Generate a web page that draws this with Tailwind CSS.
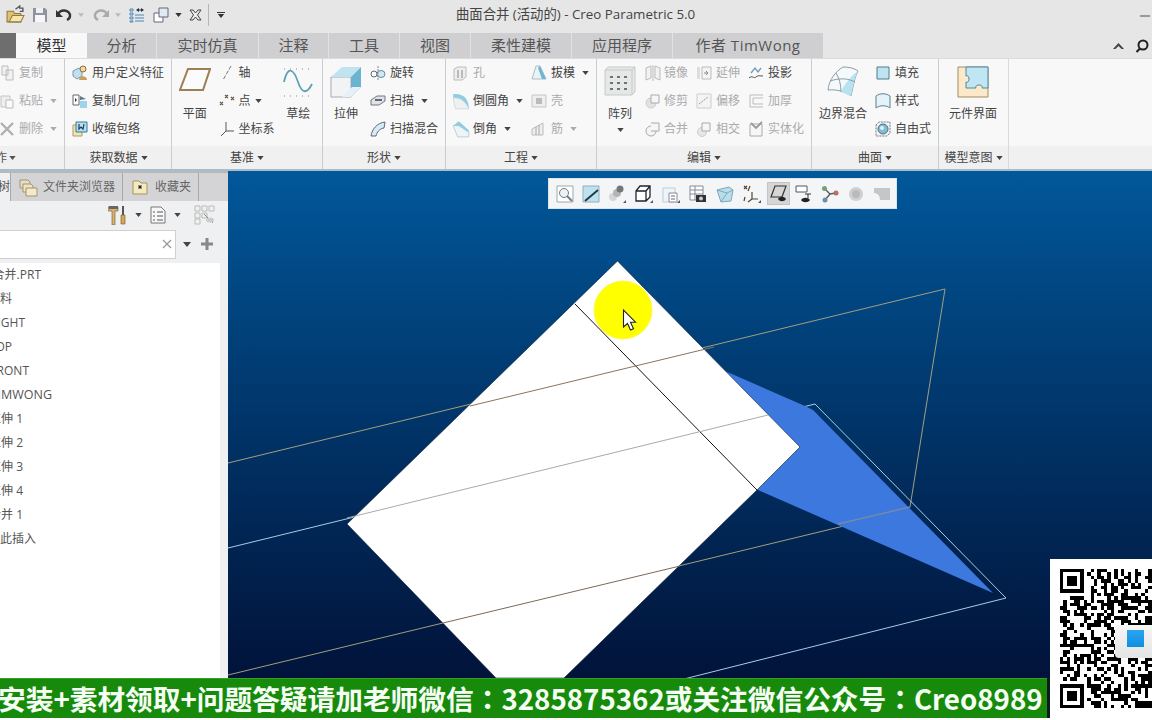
<!DOCTYPE html>
<html lang="zh-CN">
<head>
<meta charset="UTF-8" />
<title>曲面合并 - Creo Parametric 5.0</title>
<script src="https://cdn.jsdelivr.net/npm/@tailwindcss/browser@4"></script>
</head>
<body class="w-[1152px] h-[720px] overflow-hidden bg-white text-[#444] text-[12px] leading-4 font-['Open_Sans','Noto_Sans_CJK_SC',sans-serif]">

<svg class="hidden"><symbol id="caret" viewBox="0 0 8 5"><path d="M0 0H8L4 5Z"/></symbol></svg>

<!-- title bar -->
<div class="relative flex items-center h-[33px] bg-[#e6e6e6]">
  <div class="flex items-center pl-[6px] h-full pb-[4px]">
    <svg class="w-[19px] h-[19px]" viewBox="0 0 18 18"><path d="M1 6h6l1 2h6v8H1z" fill="#e3c06e" stroke="#8d7a4a"/><path d="M3 16l3-6h11l-3 6z" fill="#f8e6a8" stroke="#8d7a4a"/><path d="M9 4l4-3v2h3v3h-3" fill="none" stroke="#555" stroke-width="1.300"/></svg>
    <svg class="w-[16px] h-[16px] ml-[7px]" viewBox="0 0 16 16"><path d="M1 1h12l2 2v12H1z" fill="#8f959e"/><path d="M4 1h7v5H4z" fill="#f0f0f0"/><path d="M3 8h10v7H3z" fill="#f7f7f7"/></svg>
    <svg class="w-[16px] h-[16px] ml-[8px]" viewBox="0 0 16 16"><path d="M2 8a6 5 0 0 1 12 1c0 2-1 3-3 4" fill="none" stroke="#333" stroke-width="2.400"/><path d="M0 3v7h7z" fill="#333"/></svg>
    <svg class="w-[6px] h-[4px] ml-[6px] text-[#bbb] fill-current"><use href="#caret"/></svg>
    <svg class="w-[16px] h-[16px] ml-[9px]" viewBox="0 0 16 16"><path d="M14 8a6 5 0 0 0-12 1c0 2 1 3 3 4" fill="none" stroke="#aaa" stroke-width="2.400"/><path d="M16 3v7H9z" fill="#aaa"/></svg>
    <svg class="w-[6px] h-[4px] ml-[6px] text-[#bbb] fill-current"><use href="#caret"/></svg>
    <svg class="w-[16px] h-[16px] ml-[8px]" viewBox="0 0 16 16"><path d="M1 2h3v2H1zM1 6h3v2H1zM1 10h3v2H1zM1 14h3v1H1zM6 8h9M6 11h9M6 14h9" fill="none" stroke="#4a88b8"/><path d="M7 3l3-2v1.500h2V1l3 2-3 2V3.500h-2V5z" fill="#234"/></svg>
    <svg class="w-[16px] h-[16px] ml-[8px]" viewBox="0 0 16 16"><path d="M1 6h9v9H1z" fill="#fff" stroke="#667"/><path d="M6 1h9v9H6z" fill="#dfeaf2" stroke="#667"/></svg>
    <svg class="w-[7px] h-[4px] ml-[6px] text-[#333] fill-current"><use href="#caret"/></svg>
    <svg class="w-[13px] h-[12px] ml-[7px]" viewBox="0 0 13 12"><path d="M1 1h3l2.500 3L9 1h3L8.500 6 12 11H9L6.500 8 4 11H1l3.500-5z" fill="#eee" stroke="#444"/></svg>
    <div class="w-px h-[22px] bg-[#b5b5b5] ml-[6px]"></div>
    <div class="flex flex-col items-center gap-[1px] ml-[8px]"><div class="w-[8px] h-px bg-[#333]"></div><svg class="w-[8px] h-[4px] text-[#333] fill-current"><use href="#caret"/></svg></div>
  </div>
  <div class="absolute left-[456px] top-[6px] text-[13.350px] text-[#444] whitespace-nowrap">曲面合并 (活动的) - Creo Parametric 5.0</div>
  <div class="absolute right-[2px] top-[15px] w-[10px] h-[2px] bg-[#999]"></div>
</div>

<!-- tabs -->
<div class="flex items-stretch h-[25px] bg-[#e6e6e6] text-[15px] text-[#555]">
  <div class="w-[16px] bg-[#6e6e6e]"></div>
  <div class="w-[71px] pb-[2px] bg-[#f8f8f9] text-[#333] flex items-center justify-center">模型</div>
  <div class="w-[70px] pb-[2px] bg-[#cfcfd1] border-r border-[#e2e2e2] flex items-center justify-center">分析</div>
  <div class="w-[102px] pb-[2px] bg-[#cfcfd1] border-r border-[#e2e2e2] flex items-center justify-center">实时仿真</div>
  <div class="w-[70px] pb-[2px] bg-[#cfcfd1] border-r border-[#e2e2e2] flex items-center justify-center">注释</div>
  <div class="w-[71px] pb-[2px] bg-[#cfcfd1] border-r border-[#e2e2e2] flex items-center justify-center">工具</div>
  <div class="w-[71px] pb-[2px] bg-[#cfcfd1] border-r border-[#e2e2e2] flex items-center justify-center">视图</div>
  <div class="w-[101px] pb-[2px] bg-[#cfcfd1] border-r border-[#e2e2e2] flex items-center justify-center">柔性建模</div>
  <div class="w-[101px] pb-[2px] bg-[#cfcfd1] border-r border-[#e2e2e2] flex items-center justify-center">应用程序</div>
  <div class="w-[150px] pb-[2px] bg-[#cfcfd1] flex items-center justify-center tracking-[0.5px]">作者 TimWong</div>
  <div class="flex-1 flex items-center justify-end gap-[11px] pr-[3px]">
    <svg class="w-[11px] h-[6px] text-[#444] fill-current" viewBox="0 0 11 6"><path d="M0 6l5.500-6L11 6H8.500L5.500 3 2.500 6z"/></svg>
    <svg class="w-[14px] h-[14px]" viewBox="0 0 14 14"><circle cx="8" cy="6" r="4.500" fill="none" stroke="#222" stroke-width="2"/><path d="M5 9.500L1.500 13" stroke="#222" stroke-width="2.200"/></svg>
  </div>
</div>

<!-- ribbon -->
<div class="flex h-[113px] border-t border-[#dcdcdc] bg-[#f8f8f9] border-b-2 border-b-[#a9bccb]">

  <section class="w-[65px] -mr-px flex flex-col border-r border-[#c9cdd0] text-[#ababab] overflow-hidden">
    <div class="h-[87px] flex flex-col">
      <div class="flex items-center h-7"><svg class="w-4 h-4 ml-[-1px]" viewBox="0 0 16 16"><path d="M3 1h6v9H3zM7 5h7v10H7z" fill="#f2f2f2" stroke="#bbb"/></svg><span class="ml-[4px]">复制</span></div>
      <div class="flex items-center h-7"><svg class="w-4 h-4 ml-[-1px]" viewBox="0 0 16 16"><path d="M2 3h9v11H2z" fill="#eee" stroke="#c5c5c5"/><path d="M7 7h7v8H7z" fill="#fafafa" stroke="#bbb"/></svg><span class="ml-[4px]">粘贴</span><svg class="w-[7px] h-[4px] ml-[7px] fill-current"><use href="#caret"/></svg></div>
      <div class="flex items-center h-7"><svg class="w-4 h-4 ml-[-1px]" viewBox="0 0 16 16"><path d="M2 2l12 12M14 2L2 14" stroke="#b0b0b0" stroke-width="2.400"/></svg><span class="ml-[4px]">删除</span><svg class="w-[7px] h-[4px] ml-[7px] fill-current"><use href="#caret"/></svg></div>
    </div>
    <div class="flex-1 bg-[#f0f0f1] flex items-center text-[#555]"><span class="ml-[-17px]">操作</span><svg class="w-[7px] h-[4px] ml-[2px] fill-current"><use href="#caret"/></svg></div>
  </section>

  <section class="w-[108px] -mr-px flex flex-col border-r border-[#c9cdd0]">
    <div class="h-[87px] flex flex-col pl-[8px]">
      <div class="flex items-center h-7"><svg class="w-4 h-4" viewBox="0 0 16 16"><path d="M1 6l6-3 3 2v6l-5 3-4-3z" fill="#bfe0ee" stroke="#7d9aa8"/><circle cx="11" cy="4" r="3" fill="#f2d7a0" stroke="#8a6f3c"/><path d="M7 15c0-5 8-5 8 0z" fill="#c9a05a"/></svg><span class="ml-[4px]">用户定义特征</span></div>
      <div class="flex items-center h-7"><svg class="w-4 h-4" viewBox="0 0 16 16"><path d="M1 2h6v10H1z" fill="#fff" stroke="#667"/><path d="M3 5l2 2-2 2z" fill="#333"/><path d="M8 3l6 3-6 1z" fill="#5e7a8c"/><path d="M8 8h7v7H8z" fill="#9ed4ea"/></svg><span class="ml-[4px]">复制几何</span></div>
      <div class="flex items-center h-7"><svg class="w-4 h-4" viewBox="0 0 16 16"><path d="M1 4h9v11H1z" fill="#f3e4b8" stroke="#b39a5d"/><path d="M4 1h11v10H4z" fill="#b7e0ef" stroke="#2e7a96"/><path d="M7 3v5l2-2 2 2 1-5" fill="none" stroke="#1f3f4f" stroke-width="1.200"/></svg><span class="ml-[4px]">收缩包络</span></div>
    </div>
    <div class="flex-1 ml-px bg-[#f0f0f1] flex items-center justify-center gap-[3px] pl-[1px]"><span>获取数据</span><svg class="w-[7px] h-[4px] fill-current"><use href="#caret"/></svg></div>
  </section>

  <section class="w-[152px] -mr-px flex flex-col border-r border-[#c9cdd0]">
    <div class="h-[87px] flex">
      <div class="w-[48px] flex flex-col items-center pt-[7px]">
        <svg class="w-8 h-8" viewBox="0 0 32 32"><path d="M9 3h22l-7 21H1z" fill="#fbfbfb" stroke="#9c7f52" stroke-width="2"/></svg>
        <span class="mt-[8px]">平面</span>
      </div>
      <div class="w-[56px] flex flex-col">
        <div class="flex items-center h-7"><svg class="w-4 h-4" viewBox="0 0 16 16"><path d="M12 1L4 15" stroke="#777" stroke-dasharray="4 1.500"/></svg><span class="ml-[4px]">轴</span></div>
        <div class="flex items-center h-7"><svg class="w-4 h-4" viewBox="0 0 16 16"><path d="M6 2l3 3M9 2L6 5M12 4l3 3M15 4l-3 3M1 9l3 3M4 9l-3 3" stroke="#6b5a45" stroke-width="1.200"/></svg><span class="ml-[4px]">点</span><svg class="w-[7px] h-[4px] ml-[4px] fill-current"><use href="#caret"/></svg></div>
        <div class="flex items-center h-7"><svg class="w-4 h-4" viewBox="0 0 16 16"><path d="M7 1v9h8M7 10L2 15" fill="none" stroke="#555"/></svg><span class="ml-[4px] whitespace-nowrap">坐标系</span></div>
      </div>
      <div class="w-[48px] flex flex-col items-center pt-[7px]">
        <svg class="w-8 h-8" viewBox="0 0 32 32"><path d="M2 3h28M2 30h28" stroke="#888" stroke-dasharray="1 5"/><path d="M2 16c4-18 10-12 14 0s9 12 14 2" fill="none" stroke="#5fa2b5" stroke-width="1.800"/></svg>
        <span class="mt-[8px]">草绘</span>
      </div>
    </div>
    <div class="flex-1 ml-px bg-[#f0f0f1] flex items-center justify-center gap-[3px]"><span>基准</span><svg class="w-[7px] h-[4px] fill-current"><use href="#caret"/></svg></div>
  </section>

  <section class="w-[124px] -mr-px flex flex-col border-r border-[#c9cdd0]">
    <div class="h-[87px] flex">
      <div class="w-[48px] flex flex-col items-center pt-[7px]">
        <svg class="w-8 h-8" viewBox="0 0 32 32"><path d="M1 11h20v20H1z" fill="#f1f3f4" stroke="#aaa"/><path d="M1 11L12 1h19L21 11z" fill="#bfe3f0"/><path d="M21 11L31 1v20L21 31z" fill="#6cb3cf"/><path d="M21 31h-9l10-10h9z" fill="#e4f2f7"/></svg>
        <span class="mt-[8px]">拉伸</span>
      </div>
      <div class="flex flex-col">
        <div class="flex items-center h-7"><svg class="w-4 h-4" viewBox="0 0 16 16"><ellipse cx="4" cy="9" rx="3" ry="3" fill="none" stroke="#667"/><ellipse cx="11" cy="9" rx="4" ry="3.500" fill="#cfe8f2" stroke="#5b8ea5"/><path d="M8 1v14" stroke="#888" stroke-dasharray="2 1"/></svg><span class="ml-[4px]">旋转</span></div>
        <div class="flex items-center h-7"><svg class="w-4 h-4" viewBox="0 0 16 16"><path d="M1 7l6-4h8v5l-6 4H1z" fill="#dde3e6" stroke="#778"/><path d="M5 7h7" stroke="#667" stroke-width="2"/></svg><span class="ml-[4px]">扫描</span><svg class="w-[7px] h-[4px] ml-[7px] fill-current"><use href="#caret"/></svg></div>
        <div class="flex items-center h-7"><svg class="w-4 h-4" viewBox="0 0 16 16"><path d="M1 15C2 8 7 2 15 1l-1 6c-5 1-7 4-8 8z" fill="#d4ecf5" stroke="#667"/></svg><span class="ml-[4px] whitespace-nowrap">扫描混合</span></div>
      </div>
    </div>
    <div class="flex-1 ml-px bg-[#f0f0f1] flex items-center justify-center gap-[3px]"><span>形状</span><svg class="w-[7px] h-[4px] fill-current"><use href="#caret"/></svg></div>
  </section>

  <section class="w-[152px] -mr-px flex flex-col border-r border-[#c9cdd0]">
    <div class="h-[87px] flex">
      <div class="w-[86px] flex flex-col pl-[7px]">
        <div class="flex items-center h-7 text-[#ababab]"><svg class="w-4 h-4" viewBox="0 0 16 16"><path d="M2 4l4-2h8v10l-4 3H2z" fill="#eee" stroke="#bbb"/><path d="M6 5v8M10 5v8" stroke="#bbb" stroke-width="2"/></svg><span class="ml-[5px]">孔</span></div>
        <div class="flex items-center h-7"><svg class="w-[18px] h-[18px]" viewBox="0 0 16 16"><path d="M1 2c8-1 14 3 14 13-3-7-7-10-14-10z" fill="#8fcde3"/><path d="M1 5c7 0 11 4 14 10H3z" fill="#eef1f2" stroke="#c8d0d4" stroke-width=".6"/></svg><span class="ml-[3px]">倒圆角</span><svg class="w-[7px] h-[4px] ml-[7px] fill-current"><use href="#caret"/></svg></div>
        <div class="flex items-center h-7"><svg class="w-[18px] h-[18px]" viewBox="0 0 16 16"><path d="M1 5h5l9 6v4H5z" fill="#eef4f6" stroke="#b5c5cc" stroke-width=".7"/><path d="M1 5l5-4 9 8v2l-9-6z" fill="#8fcde3"/></svg><span class="ml-[3px]">倒角</span><svg class="w-[7px] h-[4px] ml-[7px] fill-current"><use href="#caret"/></svg></div>
      </div>
      <div class="flex flex-col">
        <div class="flex items-center h-7"><svg class="w-4 h-4" viewBox="0 0 16 16"><path d="M1 14h14L9 1H5z" fill="#e9f3f7" stroke="#b0bcc2"/><path d="M9 1l6 13-4 0L7 3z" fill="#6eb5cf"/></svg><span class="ml-[4px]">拔模</span><svg class="w-[7px] h-[4px] ml-[7px] fill-current"><use href="#caret"/></svg></div>
        <div class="flex items-center h-7 text-[#ababab]"><svg class="w-4 h-4" viewBox="0 0 16 16"><path d="M1 2h14v12H1z" fill="#eee" stroke="#c5c5c5"/><path d="M5 5h6v6H5z" fill="#bbb"/></svg><span class="ml-[4px]">壳</span></div>
        <div class="flex items-center h-7 text-[#ababab]"><svg class="w-4 h-4" viewBox="0 0 16 16"><path d="M1 14V8l11-6v12z" fill="#eee" stroke="#bbb"/><path d="M5 6v8M8 4v10" stroke="#aaa"/></svg><span class="ml-[4px]">筋</span><svg class="w-[7px] h-[4px] ml-[7px] fill-current"><use href="#caret"/></svg></div>
      </div>
    </div>
    <div class="flex-1 ml-px bg-[#f0f0f1] flex items-center justify-center gap-[3px]"><span>工程</span><svg class="w-[7px] h-[4px] fill-current"><use href="#caret"/></svg></div>
  </section>

  <section class="w-[216px] -mr-px flex flex-col border-r border-[#c9cdd0]">
    <div class="h-[87px] flex">
      <div class="w-[48px] flex flex-col items-center pt-[7px]">
        <svg class="w-8 h-8" viewBox="0 0 32 32"><path d="M1 4l3-3h27v25l-3 3H1z" fill="#e6e8e8" stroke="#c6caca"/><path d="M28 29V4H1M28 4l3-3" fill="none" stroke="#c6caca"/><path d="M6 10h3v2H6zM13 10h3v2h-3zM20 10h3v2h-3zM6 16h3v2H6zM13 16h3v2h-3zM20 16h3v2h-3zM6 22h3v2H6zM13 22h3v2h-3zM20 22h3v2h-3z" fill="#6c7478"/></svg>
        <span class="mt-[8px]">阵列</span>
        <svg class="w-[7px] h-[4px] mt-[6px] fill-current"><use href="#caret"/></svg>
      </div>
      <div class="w-[52px] flex flex-col text-[#ababab]">
        <div class="flex items-center h-7"><svg class="w-4 h-4 ml-[1px]" viewBox="0 0 16 16"><path d="M1 3l5-2v12l-5 2zM15 3l-5-2v12l5 2zM8 0v16" fill="#f2f2f2" stroke="#bbb"/></svg><span class="ml-[3px]">镜像</span></div>
        <div class="flex items-center h-7"><svg class="w-4 h-4 ml-[1px]" viewBox="0 0 16 16"><circle cx="6" cy="10" r="5" fill="#e2e2e2" stroke="#ccc"/><path d="M6 2h8v8H6z" fill="#f6f6f6" stroke="#aaa"/></svg><span class="ml-[3px]">修剪</span></div>
        <div class="flex items-center h-7"><svg class="w-4 h-4 ml-[1px]" viewBox="0 0 16 16"><circle cx="6" cy="10" r="5" fill="#f5f5f5" stroke="#aaa"/><path d="M6 2h8v8H6" fill="#f6f6f6" stroke="#aaa"/></svg><span class="ml-[3px]">合并</span></div>
      </div>
      <div class="w-[52px] flex flex-col text-[#ababab]">
        <div class="flex items-center h-7"><svg class="w-4 h-4" viewBox="0 0 16 16"><path d="M1 2h3v12H1z" fill="#ddd"/><path d="M6 2h9v12H6z" fill="#f4f4f4" stroke="#bbb"/><path d="M8 8h4M10 6l2 2-2 2" fill="none" stroke="#888"/></svg><span class="ml-[4px]">延伸</span></div>
        <div class="flex items-center h-7"><svg class="w-4 h-4" viewBox="0 0 16 16"><path d="M1 1h14v14H1z" fill="#f4f4f4" stroke="#ccc"/><path d="M3 11l9-7" stroke="#999" stroke-dasharray="2 1"/></svg><span class="ml-[4px]">偏移</span></div>
        <div class="flex items-center h-7"><svg class="w-4 h-4" viewBox="0 0 16 16"><circle cx="6" cy="11" r="4.500" fill="#e6e6e6" stroke="#ccc"/><path d="M6 2h8v8H6z" fill="#f6f6f6" stroke="#aaa"/></svg><span class="ml-[4px]">相交</span></div>
      </div>
      <div class="flex flex-col">
        <div class="flex items-center h-7"><svg class="w-4 h-4" viewBox="0 0 16 16"><path d="M1 13c3-3 5 1 7-1s4-1 7-1" fill="none" stroke="#555"/><path d="M3 8l4-5 3 4 3-4" fill="none" stroke="#6d9cb0" stroke-width="1.300"/></svg><span class="ml-[4px]">投影</span></div>
        <div class="flex items-center h-7 text-[#ababab]"><svg class="w-4 h-4" viewBox="0 0 16 16"><path d="M2 2h13M2 2v12h13M5 5h10M5 5v6h10" fill="none" stroke="#bbb"/></svg><span class="ml-[4px]">加厚</span></div>
        <div class="flex items-center h-7 text-[#ababab]"><svg class="w-4 h-4" viewBox="0 0 16 16"><path d="M2 3h12v12H2z" fill="#f6f6f6" stroke="#aaa"/><path d="M3 2l5 5 6-6" fill="none" stroke="#999" stroke-width="1.800"/></svg><span class="ml-[4px] whitespace-nowrap">实体化</span></div>
      </div>
    </div>
    <div class="flex-1 ml-px bg-[#f0f0f1] flex items-center justify-center gap-[3px]"><span>编辑</span><svg class="w-[7px] h-[4px] fill-current"><use href="#caret"/></svg></div>
  </section>

  <section class="w-[128px] -mr-px flex flex-col border-r border-[#c9cdd0]">
    <div class="h-[87px] flex">
      <div class="w-[64px] flex flex-col items-center pt-[7px]">
        <svg class="w-8 h-8" viewBox="0 0 32 32"><path d="M1 24C2 14 8 6 16 1c6 0 11 1 15 4-3 5-5 16-7 25-5-4-14-7-23-6z" fill="#f4fafc" stroke="#8b9ca3"/><path d="M14 26c3-7 9-15 17-21-3 5-5 16-7 25z" fill="#b9e2f0"/><path d="M9 7c3 5 5 11 5 19M3 15c9-3 18-3 25 1" fill="none" stroke="#8b9ca3"/></svg>
        <span class="mt-[8px] whitespace-nowrap">边界混合</span>
      </div>
      <div class="flex flex-col">
        <div class="flex items-center h-7"><svg class="w-4 h-4" viewBox="0 0 16 16"><path d="M2 2h12v12H2z" fill="#bfe3f0" stroke="#4e7d90"/></svg><span class="ml-[4px]">填充</span></div>
        <div class="flex items-center h-7"><svg class="w-4 h-4" viewBox="0 0 16 16"><path d="M1 3c4-3 10-3 14 0v12c-4-3-10-3-14 0z" fill="#e4f3f8" stroke="#5b7f8e"/></svg><span class="ml-[4px]">样式</span></div>
        <div class="flex items-center h-7"><svg class="w-4 h-4" viewBox="0 0 16 16"><path d="M1 4l3-3h11v11l-3 3H1z" fill="#f2f5f6" stroke="#778" stroke-dasharray="2 1"/><circle cx="8" cy="8" r="5" fill="#7fbcd6" stroke="#4f6f7c"/><circle cx="7" cy="7" r="2" fill="#dff0f6"/></svg><span class="ml-[4px] whitespace-nowrap">自由式</span></div>
      </div>
    </div>
    <div class="flex-1 ml-px bg-[#f0f0f1] flex items-center justify-center gap-[3px]"><span>曲面</span><svg class="w-[7px] h-[4px] fill-current"><use href="#caret"/></svg></div>
  </section>

  <section class="w-[71px] flex flex-col border-r border-[#d8dadc]">
    <div class="h-[87px] flex flex-col items-center pt-[7px]">
      <svg class="w-8 h-8" viewBox="0 0 32 32"><path d="M1 1h30v30H1z" fill="#fbe9c9" stroke="#a58b62"/><path d="M9 1h22v21h-6c2-4-8-4-6 0h-10v-6c4 2 4-8 0-6z" fill="#bfe6f2" stroke="#4f8a9f"/></svg>
      <span class="mt-[8px] whitespace-nowrap">元件界面</span>
    </div>
    <div class="flex-1 ml-px bg-[#f0f0f1] flex items-center justify-center gap-[3px]"><span class="whitespace-nowrap">模型意图</span><svg class="w-[7px] h-[4px] fill-current"><use href="#caret"/></svg></div>
  </section>
  <div class="flex-1 flex flex-col"><div class="h-[87px]"></div><div class="flex-1 bg-[#f0f0f1]"></div></div>
</div>

<!-- main area -->
<div class="flex h-[507px]">
  <aside class="w-[228px] shrink-0 flex flex-col bg-[#eff0f1] overflow-hidden">
    <div class="flex h-[30px] bg-[#d4d4d6] text-[#666] border-t-2 border-[#b8b8b8]">
      <div class="w-[11px] bg-[#eff0f1] border-r border-[#a8a8a8] flex items-center justify-end text-[#555] overflow-hidden"><span>树</span></div>
      <div class="w-[112px] border-r border-[#a8a8a8] flex items-center pl-[8px]">
        <svg class="w-[19px] h-[20px]" viewBox="0 0 19 20"><path d="M1 3h8l2 2v6H1z" fill="#e8dcc0" stroke="#a09570"/><path d="M4 7h8l2 2v6H4z" fill="#efe4c8" stroke="#a09570"/><path d="M7 11h11v8H7z" fill="#f4e9c8" stroke="#a09570"/></svg>
        <span class="ml-[5px] whitespace-nowrap">文件夹浏览器</span>
      </div>
      <div class="w-[76px] border-r border-[#a8a8a8] flex items-center pl-[9px]">
        <svg class="w-[16px] h-[16px]" viewBox="0 0 16 16"><path d="M1 2h6l2 2h6v11H1z" fill="#f6e9bd" stroke="#a39460"/><path d="M6 8h4M8 6v4M6.500 6.500l3 3M9.500 6.500l-3 3" stroke="#123" stroke-width=".9"/></svg>
        <span class="ml-[7px] whitespace-nowrap">收藏夹</span>
      </div>
    </div>
    <div class="flex items-center h-[28px] pl-[108px]">
      <svg class="w-[18px] h-[20px]" viewBox="0 0 18 20"><path d="M0 2h10v4H7v14H4V6H0z" fill="#d9b36a" stroke="#6b5630" stroke-width=".6"/><path d="M1 1h9v3H1z" fill="#666"/><path d="M14 1h2v9h-2z" fill="#555"/><path d="M13 10h4v9h-4z" fill="#d9a84e" stroke="#6b5630" stroke-width=".6"/></svg>
      <svg class="w-[7px] h-[4px] ml-[9px] text-[#444] fill-current"><use href="#caret"/></svg>
      <svg class="w-[16px] h-[18px] ml-[8px]" viewBox="0 0 16 18"><path d="M1 1h10l4 4v12H1z" fill="#f8f8f8" stroke="#777"/><path d="M3 6h2M3 10h2M3 14h2M7 6h6M7 10h6M7 14h6" stroke="#555"/></svg>
      <svg class="w-[7px] h-[4px] ml-[8px] text-[#444] fill-current"><use href="#caret"/></svg>
      <svg class="w-[21px] h-[20px] ml-[13px]" viewBox="0 0 21 20"><path d="M1 1h5v5H1zM8 1h5v5H8zM15 1h5v5h-5zM1 8h5v5H1zM1 14h5v5H1zM8 8h5v5H8z" fill="none" stroke="#bbb"/><path d="M10 9l9 9" stroke="#888"/><ellipse cx="16" cy="15" rx="4" ry="2.500" fill="#ccc"/></svg>
    </div>
    <div class="flex items-center h-[30px]">
      <div class="w-[176px] h-[29px] bg-white border border-[#d0d0d0] border-l-0 flex items-center justify-end pr-[3px]">
        <svg class="w-[10px] h-[10px]" viewBox="0 0 10 10"><path d="M1 1l8 8M9 1L1 9" stroke="#999" stroke-width="1.300"/></svg>
      </div>
      <svg class="w-[8px] h-[5px] ml-[7px] text-[#444] fill-current"><use href="#caret"/></svg>
      <svg class="w-[12px] h-[12px] ml-[10px]" viewBox="0 0 12 12"><path d="M6 0v12M0 6h12" stroke="#888" stroke-width="3"/></svg>
    </div>
    <div class="w-[220px] flex-1 mt-[4px] bg-white text-[#555] overflow-hidden">
      <div class="flex h-6 w-[41px] items-center justify-end whitespace-nowrap">曲面合并.PRT</div>
      <div class="flex h-6 w-[12px] items-center justify-end whitespace-nowrap">材料</div>
      <div class="flex h-6 w-[25px] items-center justify-end whitespace-nowrap">RIGHT</div>
      <div class="flex h-6 w-[12px] items-center justify-end whitespace-nowrap">TOP</div>
      <div class="flex h-6 w-[29px] items-center justify-end whitespace-nowrap">FRONT</div>
      <div class="flex h-6 w-[52px] items-center justify-end whitespace-nowrap text-[12.500px]">TIMWONG</div>
      <div class="flex h-6 w-[23px] items-center justify-end whitespace-nowrap">拉伸 1</div>
      <div class="flex h-6 w-[23px] items-center justify-end whitespace-nowrap">拉伸 2</div>
      <div class="flex h-6 w-[23px] items-center justify-end whitespace-nowrap">拉伸 3</div>
      <div class="flex h-6 w-[23px] items-center justify-end whitespace-nowrap">拉伸 4</div>
      <div class="flex h-6 w-[23px] items-center justify-end whitespace-nowrap">合并 1</div>
      <div class="flex h-6 w-[36px] items-center justify-end whitespace-nowrap">在此插入</div>
    </div>
  </aside>

  <!-- graphics window -->
  <main class="relative flex-1 bg-gradient-to-b from-[#01589a] to-[#01133a] overflow-hidden">
    <svg class="absolute inset-0 w-[924px] h-[507px]" viewBox="228 171 924 507">
      <path d="M228 463L945 289 910 507" fill="none" stroke="#a39e7e"/>
      <path d="M228 675L910 510" fill="none" stroke="#a39e7e"/>
      <path d="M228 548L815 404 1006 598 680 680" fill="none" stroke="#a9cde4"/>
      <path d="M725 371L805 406 813 410 993 593 758 490Z" fill="#3c78de"/>
      <path d="M838 524L910 507" stroke="#7688ad" stroke-width="1.500"/>
      <path d="M617.500 261L800 447 757 490 564 678H496L347 524Z" fill="#fff" stroke="#0a1a30" stroke-width=".6"/>
      <path d="M575 304L757 490" stroke="#111"/>
      <path d="M470 406L714 347" stroke="#8a735c"/>
      <path d="M443 623L680 566" stroke="#7a6a5a"/>
      <path d="M347 518L768 415" stroke="#aaa"/>
      <circle cx="623" cy="310" r="29" fill="#ffff00" stroke="#fdf55a"/>
      <path d="M623.500 310v17l4-3.500 3 6.500 3-1.300-3-6.500h5z" fill="#fff" stroke="#222" stroke-width="1.100"/>
    </svg>
    <div class="absolute left-[320px] top-[7px] w-[349px] h-[31px] bg-[#f4f5f6] border border-[#dfe3e6] flex items-center pl-[7px]">
      <svg class="w-[18px] h-[18px]" viewBox="0 0 18 18"><path d="M1 1h16v16H1z" fill="#fff" stroke="#9aa"/><circle cx="8" cy="8" r="4.500" fill="#eaf3f7" stroke="#778"/><path d="M11 11l5 5" stroke="#778" stroke-width="2"/></svg>
      <svg class="w-[18px] h-[18px] ml-[8px]" viewBox="0 0 18 18"><path d="M1 1h16v16H1z" fill="#bde2ef" stroke="#9ab"/><path d="M3 16L16 5" stroke="#234" stroke-width="1.800"/></svg>
      <svg class="w-[18px] h-[18px] ml-[8px]" viewBox="0 0 18 18"><circle cx="5" cy="12" r="4" fill="#d6d6d6"/><circle cx="9" cy="8" r="4" fill="#b5b5b5"/><circle cx="12" cy="4" r="3.500" fill="#777"/><path d="M18 15v3h-3z" fill="#555"/></svg>
      <svg class="w-[18px] h-[18px] ml-[9px]" viewBox="0 0 18 18"><path d="M1 6l4-5h10v11l-4 4H1zM1 6h10v10M11 6l4-5" fill="#fff" stroke="#223" stroke-width="1.300"/><path d="M18 15v3h-3z" fill="#555"/></svg>
      <svg class="w-[18px] h-[18px] ml-[9px]" viewBox="0 0 18 18"><path d="M1 3h12v14H1z" fill="#eef5f9" stroke="#bcd"/><path d="M7 8h8v9H7z" fill="#fff" stroke="#889"/><path d="M9 11h4M9 14h4" stroke="#667"/><path d="M18 15v3h-3z" fill="#555"/></svg>
      <svg class="w-[18px] h-[18px] ml-[9px]" viewBox="0 0 18 18"><path d="M1 1h13v14H1z" fill="#fff" stroke="#889"/><path d="M1 5h13M1 9h13M6 1v14" stroke="#889"/><path d="M7 10h10v7H7z" fill="#333"/><circle cx="12" cy="13.500" r="2" fill="#ccc"/></svg>
      <svg class="w-[18px] h-[18px] ml-[9px]" viewBox="0 0 18 18"><path d="M1 5l12-3 4 3-2 11-10 1z" fill="#b8deec" stroke="#7fa9ba"/><path d="M1 5l10 3 6-3M11 8l-6 9" stroke="#7fa9ba" fill="none"/></svg>
      <svg class="w-[18px] h-[18px] ml-[9px]" viewBox="0 0 18 18"><path d="M1 1l3 3M4 1L1 4M7 1L5 6M9 7v7h6M9 14l-4 3M2 12L1 16" fill="none" stroke="#543" stroke-width="1.200"/><path d="M18 15v3h-3z" fill="#555"/></svg>
      <div class="w-[23px] h-[23px] ml-[6px] bg-[#d6d6d6] border border-[#c4c4c4] flex items-center justify-center">
        <svg class="w-[17px] h-[17px]" viewBox="0 0 17 17"><path d="M5 1h11l-4 11H1z" fill="none" stroke="#333" stroke-width="1.200"/><path d="M8 14c2-3 6-3 8 0-2 3-6 3-8 0z" fill="#222"/></svg>
      </div>
      <svg class="w-[18px] h-[18px] ml-[5px]" viewBox="0 0 18 18"><path d="M1 1h11v6H1z" fill="#fff" stroke="#556"/><path d="M10 9h6M13 9v4" stroke="#333"/><path d="M6 15c2-3 7-3 9 0-2 3-7 3-9 0z" fill="#222"/></svg>
      <svg class="w-[18px] h-[18px] ml-[8px]" viewBox="0 0 18 18"><path d="M3 3l6 6 6-1M9 9l-5 6" fill="none" stroke="#555" stroke-width="1.300"/><circle cx="3.500" cy="3.500" r="2.500" fill="#6fa27a"/><circle cx="15" cy="8" r="2.500" fill="#b46f6f"/><circle cx="4" cy="15" r="2.500" fill="#6a8fa8"/></svg>
      <svg class="w-[16px] h-[16px] ml-[9px]" viewBox="0 0 16 16"><circle cx="8" cy="8" r="7" fill="#d0d0d0"/><circle cx="8" cy="8" r="4" fill="#bbb"/></svg>
      <svg class="w-[18px] h-[14px] ml-[9px]" viewBox="0 0 18 14"><path d="M1 1h16v12H7C7 8 4 6 1 6z" fill="#c6c6c6"/></svg>
    </div>
  </main>
</div>

<!-- promo banner -->
<div class="flex h-[40px] w-[1050px] bg-[#0a1c20]">
  <div class="w-[1047px] bg-[#178a0c] border-t border-[#2fa024] flex items-center overflow-hidden">
    <span class="ml-[-2px] whitespace-nowrap text-[#f6fff4] font-bold text-[27.700px] leading-none font-['Noto_Sans_CJK_SC',sans-serif]">安装+素材领取+问题答疑请加老师微信<span lang="zh-TW" class="font-['Noto_Sans_CJK_TC',sans-serif]">：</span>3285875362或关注微信公众号<span lang="zh-TW" class="font-['Noto_Sans_CJK_TC',sans-serif]">：</span>Creo8989</span>
  </div>
</div>

<!-- QR overlay -->
<div class="absolute left-[1050px] top-[559px] w-[102px] h-[161px] bg-white overflow-hidden">
  <svg class="absolute left-[10px] top-[10px] w-[139px] h-[139px] blur-[0.4px]" viewBox="0 0 41 41" shape-rendering="crispEdges"><path id="qrBits" d=""/></svg>
  <div class="absolute left-[65px] top-[66px] w-[40px] h-[33px] bg-gradient-to-b from-[#f6f6f6] to-[#e4e4e4] rounded-[4px] flex items-start pl-[12px] pt-[5px]">
    <div class="w-[17px] h-[17px] bg-gradient-to-b from-[#2aa6f0] to-[#0b8ee0]"></div>
  </div>
</div>

<script>
  // fake qr matrix, only the look of it matters
  var seed = 73, d = "";
  function rnd() { seed = (seed * 1103515 + 12345) % 2147483648; return (seed >> 12) % 100; }
  function finder(x, y) {
    return "M" + x + " " + y + "h7v7h-7zM" + (x + 1) + " " + (y + 1) + "v5h5v-5zM" + (x + 2) + " " + (y + 2) + "h3v3h-3z";
  }
  for (var y = 0; y < 41; y++) {
    for (var x = 0; x < 41; x++) {
      var skip = (x < 8 && y < 8) || (x < 8 && y > 32) || (x > 32 && y < 8);
      if (!skip && rnd() < 52) d += "M" + x + " " + y + "h1v1h-1z";
    }
  }
  d += finder(0, 0) + finder(0, 34) + finder(34, 0);
  var bits = document.getElementById("qrBits");
  bits.setAttribute("d", d);
  bits.setAttribute("fill-rule", "evenodd");
</script>
</body>
</html>
